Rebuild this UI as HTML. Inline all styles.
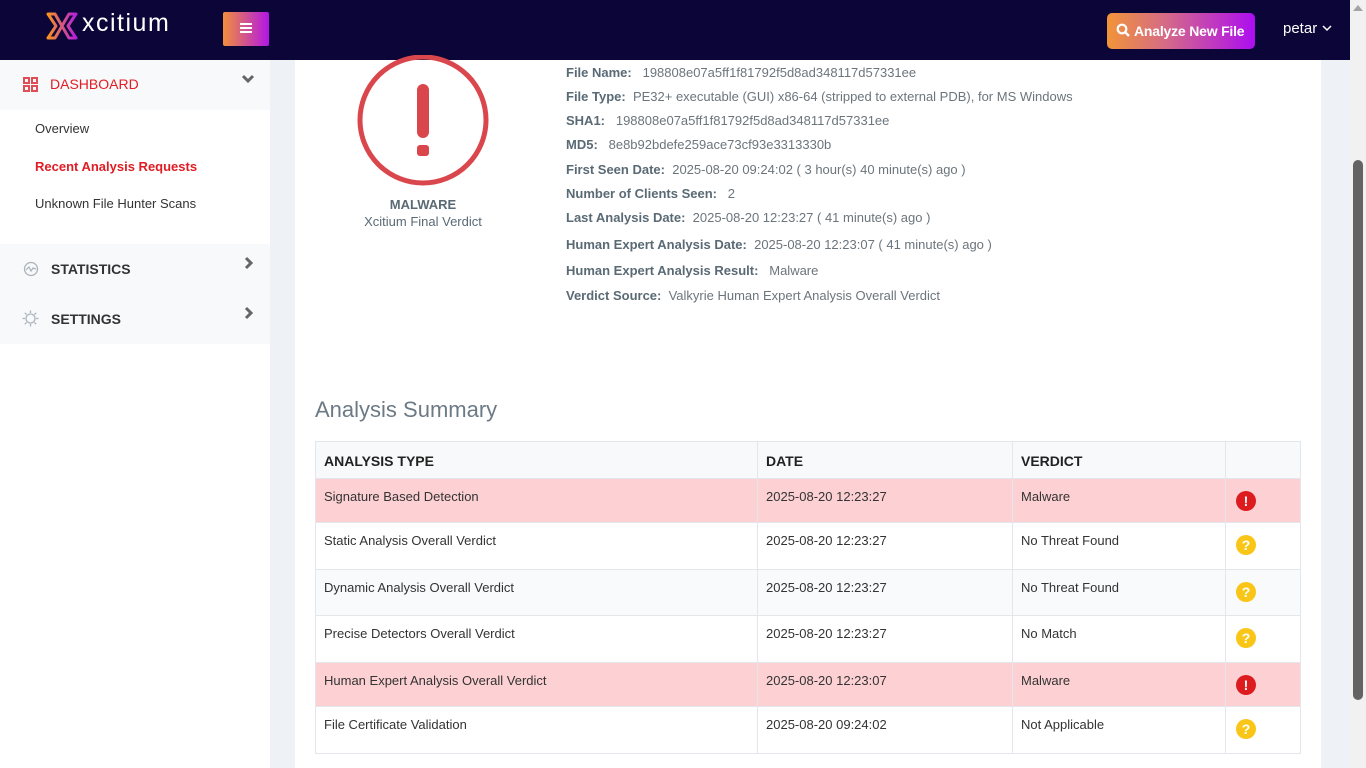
<!DOCTYPE html>
<html><head><meta charset="utf-8"><style>
*{margin:0;padding:0;box-sizing:border-box}
body{width:1366px;height:768px;overflow:hidden;background:#eef1f6;font-family:"Liberation Sans",Arial,sans-serif;position:relative}
.a{position:absolute}
.hdr{left:0;top:0;width:1350px;height:60px;background:#0b0538}
.side{left:0;top:60px;width:270px;height:708px;background:#fff}
.card{left:295px;top:60px;width:1026px;height:708px;background:#fff}
.sb{left:1350px;top:0;width:16px;height:768px;background:#f1f1f1}
.thumb{left:1353px;top:160px;width:10px;height:540px;background:#636363;border-radius:5px}
.info div{position:absolute;left:566px;font-size:13px;color:#6b757c;white-space:nowrap}
.info b{color:#5a6a75}
table{position:absolute;left:315px;top:441px;width:986px;border-collapse:collapse;font-size:13px;color:#333}
td,th{border:1px solid #e3e6ea;text-align:left;vertical-align:top;padding:10px 8px 0 8px}
th{background:#f8f9fa;font-size:14px;color:#222;height:37px;padding-top:11px}
tr.m td{background:#fdd1d3}
.ic{width:20px;height:20px;border-radius:50%;color:#fff;font-weight:bold;text-align:center;font-size:14px;line-height:20px;margin-top:2px;margin-left:2px}
.r{background:#dd1c1f}.y{background:#f9c617}
</style></head><body>
<div class="a hdr"></div>
<svg class="a" style="left:44px;top:11px" width="36" height="30" viewBox="0 0 36 30"><defs><linearGradient id="g" x1="0" x2="1"><stop offset="0" stop-color="#f7931e"/><stop offset="1" stop-color="#b31ee0"/></linearGradient></defs><g fill="none" stroke="url(#g)" stroke-width="3" stroke-linejoin="round" stroke-linecap="round"><path d="M4 3 H11 L25 27 H32 L24 15 L32 3 H25 L11 27 H4 L12 15 Z"/></g></svg>
<div class="a" style="left:82px;top:9px;color:#fff;font-size:25px;letter-spacing:1.5px">xcitium</div>
<div class="a" style="left:223px;top:12px;width:46px;height:34px;border-radius:2px;background:linear-gradient(90deg,#f28f3b,#b116e6)"></div>
<div class="a" style="left:240px;top:23px;width:12px;height:2px;background:#fff;box-shadow:0 4px 0 #fff,0 8px 0 #fff"></div>
<div class="a" style="left:1107px;top:13px;width:148px;height:36px;border-radius:5px;background:linear-gradient(90deg,#f29438,#d46a88 40%,#ad0ef0);color:#fff;font-weight:bold;font-size:14px;line-height:36px;padding-left:27px;letter-spacing:-0.2px">Analyze New File</div>
<svg class="a" style="left:1116px;top:23px" width="14" height="14"><circle cx="6" cy="6" r="4.3" fill="none" stroke="#fff" stroke-width="2.2"/><path d="M9 9 L13 13" stroke="#fff" stroke-width="2.4"/></svg>
<div class="a" style="left:1283px;top:20px;color:#fff;font-size:15px">petar</div>
<svg class="a" style="left:1322px;top:25px" width="10" height="7"><path d="M1 1 L5 5 L9 1" fill="none" stroke="#fff" stroke-width="1.5"/></svg>
<div class="a side"></div>
<div class="a" style="left:0;top:60px;width:270px;height:50px;background:#f8f9fb"></div>
<div class="a" style="left:0;top:244px;width:270px;height:100px;background:#f8f9fb"></div>
<svg class="a" style="left:23px;top:77px" width="15" height="15"><g fill="none" stroke="#df4e55" stroke-width="2"><rect x="1" y="1" width="5" height="5"/><rect x="9" y="1" width="5" height="5"/><rect x="1" y="9" width="5" height="5"/><rect x="9" y="9" width="5" height="5"/></g></svg>
<div class="a" style="left:50px;top:76px;color:#e01d24;font-size:14px">DASHBOARD</div>
<svg class="a" style="left:241px;top:74px" width="14" height="10"><path d="M2 2 L7 7 L12 2" fill="none" stroke="#666" stroke-width="3"/></svg>
<div class="a" style="left:35px;top:121px;font-size:13px;color:#333">Overview</div>
<div class="a" style="left:35px;top:159px;font-size:13px;color:#e01d24;font-weight:bold">Recent Analysis Requests</div>
<div class="a" style="left:35px;top:196px;font-size:13px;color:#333">Unknown File Hunter Scans</div>
<svg class="a" style="left:23px;top:261px" width="16" height="16"><circle cx="8" cy="8" r="6.5" fill="none" stroke="#aab3bb" stroke-width="1.3"/><path d="M3 9 L6 6 L8 10 L10 7 L13 8" fill="none" stroke="#aab3bb" stroke-width="1.2"/></svg>
<div class="a" style="left:51px;top:261px;font-size:14px;font-weight:bold;color:#333">STATISTICS</div>
<svg class="a" style="left:244px;top:256px" width="10" height="14"><path d="M2 2 L7 7 L2 12" fill="none" stroke="#666" stroke-width="3"/></svg>
<svg class="a" style="left:22px;top:310px" width="17" height="17"><circle cx="8.5" cy="8.5" r="4.5" fill="none" stroke="#aab3bb" stroke-width="1.3"/><path d="M8.5 0.5V3M8.5 14V16.5M0.5 8.5H3M14 8.5H16.5M2.8 2.8L4.6 4.6M12.4 12.4L14.2 14.2M2.8 14.2L4.6 12.4M12.4 4.6L14.2 2.8" stroke="#aab3bb" stroke-width="1.3"/></svg>
<div class="a" style="left:51px;top:311px;font-size:14px;font-weight:bold;color:#333">SETTINGS</div>
<svg class="a" style="left:244px;top:306px" width="10" height="14"><path d="M2 2 L7 7 L2 12" fill="none" stroke="#666" stroke-width="3"/></svg>
<div class="a card"></div>
<svg class="a" style="left:355px;top:55px" width="136" height="133"><circle cx="68" cy="65" r="63" fill="none" stroke="#d9474d" stroke-width="5"/><rect x="62" y="29" width="12" height="54" rx="6" fill="#d9474d"/><rect x="62" y="90" width="12" height="11" rx="3" fill="#d9474d"/></svg>
<div class="a" style="left:323px;top:197px;width:200px;text-align:center;font-size:13px;color:#5a6a75;font-weight:bold">MALWARE</div>
<div class="a" style="left:323px;top:214px;width:200px;text-align:center;font-size:13px;color:#5a6a75">Xcitium Final Verdict</div>
<div class="info">
<div style="top:65px"><b>File Name:</b>&nbsp;&nbsp; 198808e07a5ff1f81792f5d8ad348117d57331ee</div>
<div style="top:89px"><b>File Type:</b>&nbsp; PE32+ executable (GUI) x86-64 (stripped to external PDB), for MS Windows</div>
<div style="top:113px"><b>SHA1:</b>&nbsp;&nbsp; 198808e07a5ff1f81792f5d8ad348117d57331ee</div>
<div style="top:137px"><b>MD5:</b>&nbsp;&nbsp; 8e8b92bdefe259ace73cf93e3313330b</div>
<div style="top:162px"><b>First Seen Date:</b>&nbsp; 2025-08-20 09:24:02 ( 3 hour(s) 40 minute(s) ago )</div>
<div style="top:186px"><b>Number of Clients Seen:</b>&nbsp;&nbsp; 2</div>
<div style="top:210px"><b>Last Analysis Date:</b>&nbsp; 2025-08-20 12:23:27 ( 41 minute(s) ago )</div>
<div style="top:237px"><b>Human Expert Analysis Date:</b>&nbsp; 2025-08-20 12:23:07 ( 41 minute(s) ago )</div>
<div style="top:263px"><b>Human Expert Analysis Result:</b>&nbsp;&nbsp; Malware</div>
<div style="top:288px"><b>Verdict Source:</b>&nbsp; Valkyrie Human Expert Analysis Overall Verdict</div>
</div>
<div class="a" style="left:315px;top:397px;font-size:22px;color:#6c7a86">Analysis Summary</div>
<table>
<tr><th style="width:442px">ANALYSIS TYPE</th><th style="width:255px">DATE</th><th style="width:213px">VERDICT</th><th></th></tr>
<tr class="m" style="height:44px"><td>Signature Based Detection</td><td>2025-08-20 12:23:27</td><td>Malware</td><td><div class="ic r">!</div></td></tr>
<tr style="height:47px"><td>Static Analysis Overall Verdict</td><td>2025-08-20 12:23:27</td><td>No Threat Found</td><td><div class="ic y">?</div></td></tr>
<tr style="height:46px;background:#f9fafb"><td>Dynamic Analysis Overall Verdict</td><td>2025-08-20 12:23:27</td><td>No Threat Found</td><td><div class="ic y">?</div></td></tr>
<tr style="height:47px"><td>Precise Detectors Overall Verdict</td><td>2025-08-20 12:23:27</td><td>No Match</td><td><div class="ic y">?</div></td></tr>
<tr class="m" style="height:44px"><td>Human Expert Analysis Overall Verdict</td><td>2025-08-20 12:23:07</td><td>Malware</td><td><div class="ic r">!</div></td></tr>
<tr style="height:47px"><td>File Certificate Validation</td><td>2025-08-20 09:24:02</td><td>Not Applicable</td><td><div class="ic y">?</div></td></tr>
</table>
<div class="a sb"></div>
<div class="a thumb"></div>
<svg class="a" style="left:1353px;top:5px" width="10" height="6"><path d="M0 6 L5 0 L10 6Z" fill="#a3a3a3"/></svg>
</body></html>
